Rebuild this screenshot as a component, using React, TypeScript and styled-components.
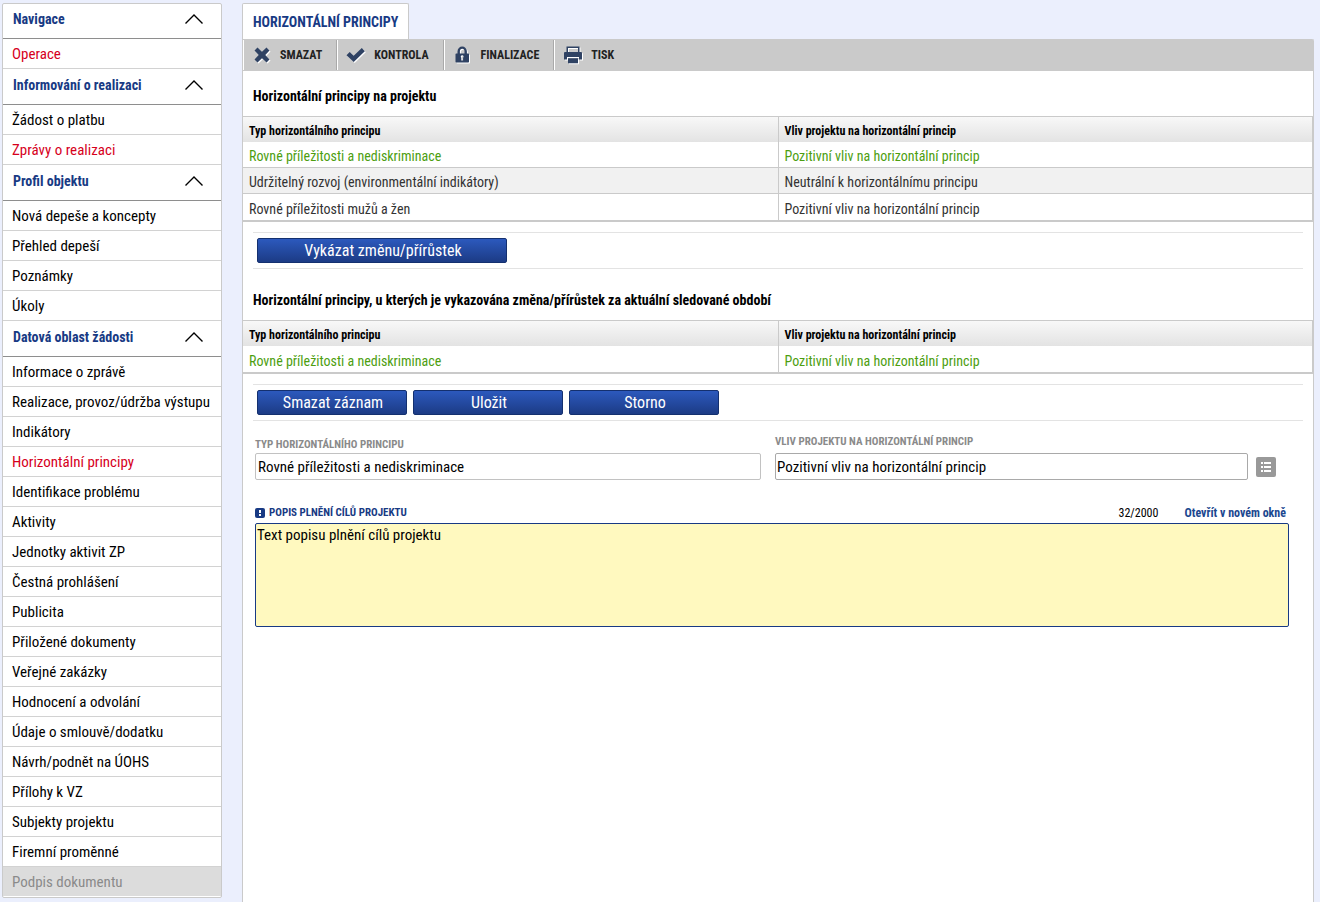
import React, { useState } from 'react';
import styled, { createGlobalStyle, css } from 'styled-components';

const line = '#cacaca';
const navy = '#183a84';
const red = '#d6001c';
const ink = '#2f4263';

const GlobalStyle = createGlobalStyle`
  *, *::before, *::after { box-sizing: border-box; }
  body {
    margin: 0;
    background: #ebeffd;
    color: #000;
    font-family: "Roboto Condensed", Roboto, "Liberation Sans", sans-serif;
    font-size: 14px;
    line-height: 20px;
  }
  button, input, textarea { font-family: inherit; }
`;

const Page = styled.div`
  display: flex;
  align-items: flex-start;
  gap: 20px;
  min-height: 100vh;
  padding: 3px 6px 0 2px;
`;

const Sidebar = styled.nav`
  flex: 0 0 220px;
  border: 1px solid ${line};
  border-radius: 2px;
  background: #fff;
  padding-bottom: 1px;
`;

const Group = styled.section`
  &:first-child > h2 > button { height: 35px; padding-bottom: 5px; }
  &:last-child li:last-child a { height: 29px; border-bottom: 0; }
`;

const GroupTitle = styled.h2`
  margin: 0;
  font-size: 14px;
`;

const GroupToggle = styled.button`
  display: flex;
  align-items: center;
  justify-content: space-between;
  width: 100%;
  height: 36px;
  padding: 0 17px 4px 10px;
  border: 0;
  border-bottom: 1px solid #8e8e8e;
  background: transparent;
  color: ${navy};
  font-size: 14px;
  font-weight: 700;
  text-align: left;
  cursor: pointer;
`;

const Items = styled.ul`
  margin: 0;
  padding: 0;
  list-style: none;
`;

const ItemLink = styled.a<{ $tone?: Tone }>`
  display: flex;
  align-items: center;
  height: 30px;
  padding: 0 9px;
  border-bottom: 1px solid #d2d2d2;
  color: ${({ $tone }) => ($tone === 'red' ? red : $tone === 'muted' ? '#8a8a8a' : '#000')};
  background: ${({ $tone }) => ($tone === 'muted' ? '#dcdcdc' : 'transparent')};
  font-size: 15px;
  text-decoration: none;
`;

const Content = styled.main`
  flex: 1;
  min-width: 0;
  display: flex;
  flex-direction: column;
  align-self: stretch;
`;

const Tab = styled.h1`
  align-self: flex-start;
  margin: 0;
  padding: 9px 10px 7px;
  border: 1px solid ${line};
  border-bottom: 0;
  border-radius: 2px 2px 0 0;
  background: #fff;
  color: ${navy};
  font-size: 14px;
  font-weight: 700;
  line-height: 19px;
`;

const Panel = styled.div`
  flex: 1;
  border: 1px solid ${line};
  border-width: 1px 1px 0;
  border-radius: 0 2px 0 0;
  background: #fff;
`;

const Toolbar = styled.div`
  display: flex;
  height: 31px;
  padding-bottom: 1px;
  background: ${line};
`;

const Tool = styled.button`
  display: grid;
  grid-template-columns: 20px auto;
  align-items: center;
  gap: 8px;
  padding: 0 14px 0 8px;
  border: 0;
  border-left: 1px solid #fff;
  border-right: 1px solid #a9a9a9;
  background: transparent;
  color: #222;
  font-size: 12px;
  font-weight: 700;
  cursor: pointer;

  &:last-child { border-right: 0; }
`;

const Heading = styled.h2`
  margin: 0;
  padding: 15px 10px 10px;
  font-size: 14px;
  font-weight: 700;
  line-height: 20px;
`;

const Table = styled.table`
  width: 100%;
  table-layout: fixed;
  border-collapse: separate;
  border-spacing: 0;
  border: solid ${line};
  border-width: 1px 1px 2px 0;
`;

const HeadCell = styled.th`
  height: 25px;
  padding: 2px 6px 0;
  background: linear-gradient(#f8f8f8, #e3e3e3);
  font-size: 12px;
  line-height: 20px;
  text-align: left;

  & + & { border-left: 1px solid ${line}; }
`;

const Cell = styled.td`
  height: 26px;
  padding: 4px 6px 1px;
  border-bottom: 1px solid ${line};
  font-size: 14px;
  line-height: 20px;

  & + & { border-left: 1px solid ${line}; }
`;

const Row = styled.tr<{ $selected?: boolean }>`
  color: ${({ $selected }) => ($selected ? '#4d9e10' : '#333')};

  &:nth-child(even) { background: #f1f1f1; }
  &:last-child > td { border-bottom: 0; }
`;

const Actions = styled.div`
  display: flex;
  gap: 6px;
  margin: 10px 10px 0;
  padding: 5px 4px;
  border: solid #e3e3e3;
  border-width: 1px 0;
`;

const Action = styled.button<{ $wide?: boolean }>`
  width: ${({ $wide }) => ($wide ? 250 : 150)}px;
  height: 25px;
  padding: 1px 0 0 2px;
  border: 1px solid #14306f;
  border-radius: 2px;
  background: linear-gradient(#2c59bd, #1c3b85);
  color: #fff;
  font-size: 16px;
  line-height: 22px;
  cursor: pointer;
`;

const Section = styled.section<{ $spaced?: boolean }>`
  ${({ $spaced }) => $spaced && css`margin-top: 6px;`}
`;

const Form = styled.form`
  padding: 13px 24px 0 12px;
`;

const Fields = styled.div`
  display: grid;
  grid-template-columns: 1fr 1fr;
  align-items: end;
  gap: 14px;
  margin-right: 8px;
`;

const Field = styled.div`
  display: flex;
  flex-direction: column;
  min-width: 0;
`;

const Label = styled.label<{ $gap?: number }>`
  padding-bottom: ${({ $gap = 0 }) => $gap}px;
  color: #8a8a8a;
  font-size: 11px;
  font-weight: 700;
  line-height: 16px;
`;

const PickerRow = styled.div`
  display: flex;
  align-items: center;
  gap: 8px;
  margin-right: 5px;
`;

const TextInput = styled.input`
  flex: 1;
  width: 100%;
  min-width: 0;
  height: 27px;
  min-height: 27px;
  padding: 0 1px;
  border: 1px solid #a9a9a9;
  border-radius: 2px;
  background: #fff;
  color: #000;
  font-size: 15px;

  &:read-only { border-color: #c2c2c2; padding-left: 2px; }
`;

const Picker = styled.button`
  display: grid;
  place-items: center;
  width: 20px;
  height: 20px;
  padding: 0;
  border: 0;
  border-radius: 2px;
  background: #999;
  cursor: pointer;
`;

const AreaHead = styled.div`
  display: flex;
  align-items: center;
  margin: 25px 3px 2px 0;
`;

const AreaLabel = styled.label`
  display: flex;
  align-items: center;
  gap: 4px;
  margin-right: auto;
  color: ${navy};
  font-size: 11px;
  font-weight: 700;
  line-height: 16px;
`;

const Count = styled.span`
  margin-right: 26px;
  font-size: 12px;
  line-height: 16px;
`;

const OpenLink = styled.a`
  color: #1b478f;
  font-size: 12px;
  font-weight: 700;
  line-height: 16px;
  text-decoration: none;
`;

const TextArea = styled.textarea`
  display: block;
  width: 100%;
  height: 104px;
  padding: 1px;
  border: 1px solid ${navy};
  border-radius: 2px;
  background: #fff9bf;
  color: #000;
  font-size: 15px;
  line-height: 20px;
  resize: none;
`;

type Tone = 'red' | 'muted';
type Item = { label: string; tone?: Tone };

const groups: { title: string; items: Item[] }[] = [
  { title: 'Navigace', items: [{ label: 'Operace', tone: 'red' }] },
  {
    title: 'Informování o realizaci',
    items: [{ label: 'Žádost o platbu' }, { label: 'Zprávy o realizaci', tone: 'red' }],
  },
  {
    title: 'Profil objektu',
    items: [
      { label: 'Nová depeše a koncepty' },
      { label: 'Přehled depeší' },
      { label: 'Poznámky' },
      { label: 'Úkoly' },
    ],
  },
  {
    title: 'Datová oblast žádosti',
    items: [
      { label: 'Informace o zprávě' },
      { label: 'Realizace, provoz/údržba výstupu' },
      { label: 'Indikátory' },
      { label: 'Horizontální principy', tone: 'red' },
      { label: 'Identifikace problému' },
      { label: 'Aktivity' },
      { label: 'Jednotky aktivit ZP' },
      { label: 'Čestná prohlášení' },
      { label: 'Publicita' },
      { label: 'Přiložené dokumenty' },
      { label: 'Veřejné zakázky' },
      { label: 'Hodnocení a odvolání' },
      { label: 'Údaje o smlouvě/dodatku' },
      { label: 'Návrh/podnět na ÚOHS' },
      { label: 'Přílohy k VZ' },
      { label: 'Subjekty projektu' },
      { label: 'Firemní proměnné' },
      { label: 'Podpis dokumentu', tone: 'muted' },
    ],
  },
];

const Chevron = () => (
  <svg width="20" height="12" viewBox="0 0 20 12" fill="none" stroke="#000" strokeWidth="1.4" aria-hidden="true">
    <path d="M1.500 10.500 10 2l8.500 8.500" />
  </svg>
);

// Toolbar glyphs carry a one-pixel white highlight below and to the right.
const Glyph = ({ d }: { d: string }) => (
  <svg width="20" height="20" viewBox="0 0 20 20" overflow="visible" fillRule="evenodd" aria-hidden="true">
    <path d={d} fill="#fff" transform="translate(1 1)" />
    <path d={d} fill={ink} />
  </svg>
);

const tools = [
  { label: 'SMAZAT', d: 'M5.500 2.500 10 6.700l4.500-4.200 3 3-4.200 4.500 4.200 4.500-3 3-4.500-4.200-4.500 4.200-3-3L6.700 10 2.500 5.500z' },
  { label: 'KONTROLA', d: 'M.5 10.200 3.700 7l4 3.800L15.800 3l3 3.200L7.700 17z' },
  { label: 'FINALIZACE', d: 'M4.500 8.500V6.500a4.700 5 0 0 1 9.400 0v2h1.300a.8.8 0 0 1 .8.8v7.400a.8.8 0 0 1-.8.800H3.300a.8.8 0 0 1-.8-.8V9.300a.8.8 0 0 1 .8-.8zm2.400 0h4.600V6.500a2.300 2.700 0 0 0-4.600 0zM9.200 10.200a1.400 1.400 0 0 0-.9 2.500V15.500h1.800v-2.800a1.400 1.400 0 0 0-.9-2.500z' },
  { label: 'TISK', d: 'M3.500 1.500h13v5.500H18a1 1 0 0 1 1 1v6.500h-3V12H4v2.500H1V8a1 1 0 0 1 1-1h1.500zm1.500 1.500V7h10V3zM5 13.200h10v5H5z' },
];

const ListGlyph = () => (
  <svg width="10" height="10" viewBox="0 0 10 10" fill="#fff" aria-hidden="true">
    <path d="M0 0h2v2H0zM3 0h7v2H3zM0 4h2v2H0zM3 4h7v2H3zM0 8h2v2H0zM3 8h7v2H3z" />
  </svg>
);

const RequiredGlyph = () => (
  <svg width="10" height="10" viewBox="0 0 10 10" aria-hidden="true">
    <rect width="10" height="10" rx="2" fill={navy} />
    <path d="M4 2h2v3H4zM4 6h2v2H4z" fill="#fff" />
  </svg>
);

type Principle = { kind: string; effect: string };

const principles: Principle[] = [
  { kind: 'Rovné příležitosti a nediskriminace', effect: 'Pozitivní vliv na horizontální princip' },
  { kind: 'Udržitelný rozvoj (environmentální indikátory)', effect: 'Neutrální k horizontálnímu principu' },
  { kind: 'Rovné příležitosti mužů a žen', effect: 'Pozitivní vliv na horizontální princip' },
];

const PrincipleTable = ({ rows }: { rows: Principle[] }) => (
  <Table>
    <thead>
      <tr>
        <HeadCell scope="col">Typ horizontálního principu</HeadCell>
        <HeadCell scope="col">Vliv projektu na horizontální princip</HeadCell>
      </tr>
    </thead>
    <tbody>
      {rows.map((row, i) => (
        <Row key={row.kind} $selected={i === 0}>
          <Cell>{row.kind}</Cell>
          <Cell>{row.effect}</Cell>
        </Row>
      ))}
    </tbody>
  </Table>
);

const NavGroup = ({ title, items }: { title: string; items: Item[] }) => {
  const [open, setOpen] = useState(true);
  return (
    <Group>
      <GroupTitle>
        <GroupToggle type="button" aria-expanded={open} onClick={() => setOpen(!open)}>
          {title}
          <Chevron />
        </GroupToggle>
      </GroupTitle>
      {open && (
        <Items>
          {items.map((item) => (
            <li key={item.label}>
              <ItemLink href="#" $tone={item.tone}>{item.label}</ItemLink>
            </li>
          ))}
        </Items>
      )}
    </Group>
  );
};

export default function App() {
  return (
    <>
      <GlobalStyle />
      <Page>
        <Sidebar>
          {groups.map((group) => (
            <NavGroup key={group.title} {...group} />
          ))}
        </Sidebar>
        <Content>
          <Tab>HORIZONTÁLNÍ PRINCIPY</Tab>
          <Panel>
            <Toolbar>
              {tools.map((tool) => (
                <Tool key={tool.label} type="button">
                  <Glyph d={tool.d} />
                  {tool.label}
                </Tool>
              ))}
            </Toolbar>
            <Section>
              <Heading>Horizontální principy na projektu</Heading>
              <PrincipleTable rows={principles} />
              <Actions>
                <Action type="button" $wide>Vykázat změnu/přírůstek</Action>
              </Actions>
            </Section>
            <Section $spaced>
              <Heading>Horizontální principy, u kterých je vykazována změna/přírůstek za aktuální sledované období</Heading>
              <PrincipleTable rows={principles.slice(0, 1)} />
              <Actions>
                <Action type="button">Smazat záznam</Action>
                <Action type="button">Uložit</Action>
                <Action type="button">Storno</Action>
              </Actions>
            </Section>
            <Form>
              <Fields>
                <Field>
                  <Label htmlFor="kind">TYP HORIZONTÁLNÍHO PRINCIPU</Label>
                  <TextInput id="kind" readOnly value="Rovné příležitosti a nediskriminace" />
                </Field>
                <Field>
                  <Label htmlFor="effect" $gap={3}>VLIV PROJEKTU NA HORIZONTÁLNÍ PRINCIP</Label>
                  <PickerRow>
                    <TextInput id="effect" defaultValue="Pozitivní vliv na horizontální princip" />
                    <Picker type="button" aria-label="Vybrat ze seznamu">
                      <ListGlyph />
                    </Picker>
                  </PickerRow>
                </Field>
              </Fields>
              <AreaHead>
                <AreaLabel htmlFor="description">
                  <RequiredGlyph />
                  POPIS PLNĚNÍ CÍLŮ PROJEKTU
                </AreaLabel>
                <Count>32/2000</Count>
                <OpenLink href="#">Otevřít v novém okně</OpenLink>
              </AreaHead>
              <TextArea id="description" defaultValue="Text popisu plnění cílů projektu" />
            </Form>
          </Panel>
        </Content>
      </Page>
    </>
  );
}
